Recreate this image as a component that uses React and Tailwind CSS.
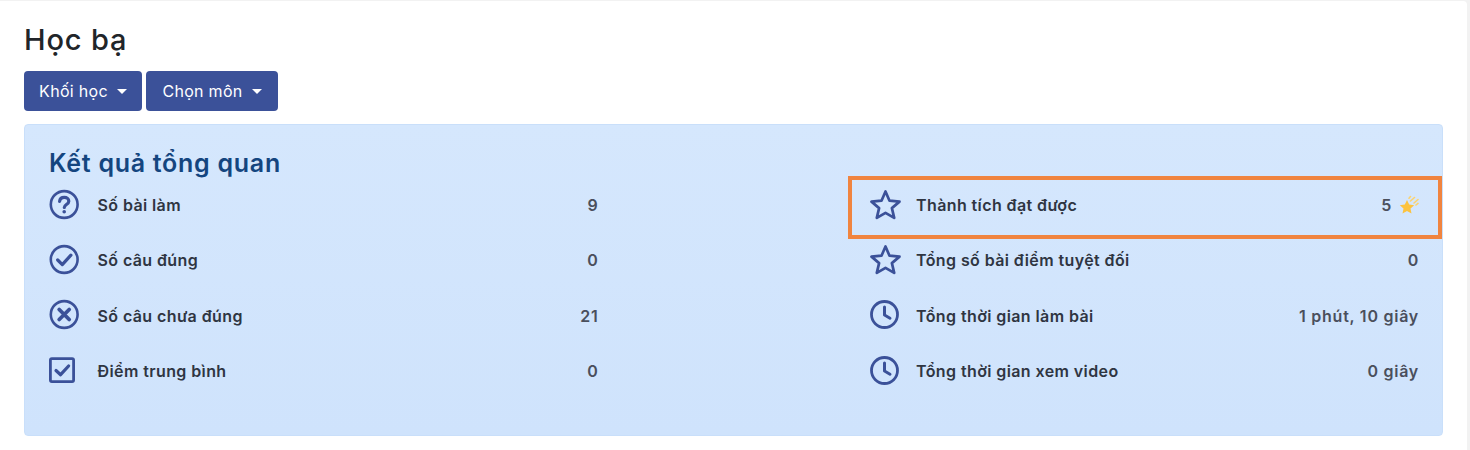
import React from "react";

const Help = () => (
  <svg width="32" height="32" viewBox="0 0 32 32" fill="none" stroke="#3b5199" strokeWidth="2.6" strokeLinecap="round" strokeLinejoin="round">
    <circle cx="16.2" cy="15.5" r="13.4" />
    <path d="M11.6 12.4c.3-2.6 2.2-4 4.7-4 2.6 0 4.5 1.6 4.5 3.8 0 3.2-4.5 3.4-4.5 6.2" strokeWidth="3.2" />
    <circle cx="16.2" cy="22.8" r="1.8" fill="#3b5199" stroke="none" />
  </svg>
);
const Check = () => (
  <svg width="32" height="32" viewBox="0 0 32 32" fill="none" stroke="#3b5199" strokeWidth="2.6" strokeLinecap="round" strokeLinejoin="round">
    <circle cx="16.2" cy="15.5" r="13.4" />
    <path d="M9.7 16l4.6 4.6 8.6-9.4" strokeWidth="3.2" />
  </svg>
);
const Cross = () => (
  <svg width="32" height="32" viewBox="0 0 32 32" fill="none" stroke="#3b5199" strokeWidth="2.6" strokeLinecap="round">
    <circle cx="16.2" cy="15.5" r="13.4" />
    <path d="M11.2 10.5l10 10M21.2 10.5l-10 10" strokeWidth="3.8" />
  </svg>
);
const SquareTick = () => (
  <svg width="32" height="32" viewBox="0 0 32 32" fill="none" stroke="#3b5199" strokeWidth="2.8" strokeLinecap="round" strokeLinejoin="round">
    <rect x="2.4" y="3.6" width="23.2" height="23" rx="1.5" />
    <path d="M8 15.5l4.6 4.2 8-8.7" strokeWidth="3.2" />
  </svg>
);
const Star = () => (
  <svg width="32" height="32" viewBox="0 0 32 32" fill="none" stroke="#3b5199" strokeWidth="2.7" strokeLinejoin="round">
    <path d="M15.5 2.5l4 9.2 10 .9-7.6 6.5 2.3 9.8-8.7-5.1-8.7 5.1 2.3-9.8-7.6-6.5 10-.9z" />
  </svg>
);
const Clock = () => (
  <svg width="32" height="32" viewBox="0 0 32 32" fill="none" stroke="#3b5199" strokeWidth="2.8" strokeLinecap="round" strokeLinejoin="round">
    <circle cx="14.5" cy="15.5" r="13" />
    <path d="M14.5 8V16l5.5 3.2" strokeWidth="3" />
  </svg>
);
const Shooting = () => (
  <svg width="20" height="20" viewBox="0 0 20 20" className="ml-[7px]">
    <path d="M8 5l2.2 4.6 5 .6-3.7 3.3 1 5-4.5-2.6-4.5 2.6 1-5L.8 10.2l5-.6z" fill="#fcc33f" />
    <path d="M11.5 6L15.5 2.5M15 8L19 4.5M17 10l2-1.6M10 3.2L11.5 1.5" stroke="#fcd36e" strokeWidth="1.6" strokeLinecap="round" fill="none" />
  </svg>
);

const Row = ({ icon, label, value, extra, right }) => (
  <div className="flex h-[55.3px] items-center justify-between">
    <div className="flex items-center">
      <div className={right ? "w-[46.5px] shrink-0" : "ml-[-1px] w-[49.5px] shrink-0"}>{icon}</div>
      <span className="pt-px text-[16px] font-semibold tracking-[0.4px] text-[#2f3542]">{label}</span>
    </div>
    <div className="mr-[-1px] flex items-center pt-px text-[16px] font-semibold tracking-[0.75px] text-[#4a4f5c]">
      {value}
      {extra}
    </div>
  </div>
);

const Dropdown = ({ label, width }) => (
  <button className={`flex h-10 ${width} items-center justify-center rounded-[4px] bg-[#3b5199] text-[16px] tracking-[0.3px] text-white`}>
    {label}
    <span className="ml-[9px] h-0 w-0 border-x-[5px] border-t-[5px] border-x-transparent border-t-white" />
  </button>
);

export default function App() {
  return (
    <div className="h-[450px] w-[1470px] bg-[#f2f2f2] pt-px pr-[3px] font-['Inter',sans-serif]">
      <div className="h-[449px] rounded-tr-[4px] bg-white px-6 pt-[20px]">
        <h1 className="text-[29px] leading-[38px] font-medium tracking-[0.85px] text-[#212529]">Học bạ</h1>
        <div className="mt-3 flex gap-1">
          <Dropdown label="Khối học" width="w-[118px]" />
          <Dropdown label="Chọn môn" width="w-[132px]" />
        </div>
        <div className="relative mt-[13px] h-[312px] w-[1419px] rounded-[4px] border border-[#c9dffa] bg-gradient-to-b from-[#d5e7fd] to-[#cfe3fc] px-6 pt-[20px]">
          <h2 className="text-[25px] leading-[36px] font-semibold tracking-[0.72px] text-[#14457f]">Kết quả tổng quan</h2>
          <div className="mt-[-4px] grid grid-cols-2 gap-x-[272px]">
            <div>
              <Row icon={<Help />} label="Số bài làm" value="9" />
              <Row icon={<Check />} label="Số câu đúng" value="0" />
              <Row icon={<Cross />} label="Số câu chưa đúng" value="21" />
              <Row icon={<SquareTick />} label="Điểm trung bình" value="0" />
            </div>
            <div>
              <Row right icon={<Star />} label="Thành tích đạt được" value="5" extra={<Shooting />} />
              <Row right icon={<Star />} label="Tổng số bài điểm tuyệt đối" value="0" />
              <Row right icon={<Clock />} label="Tổng thời gian làm bài" value="1 phút, 10 giây" />
              <Row right icon={<Clock />} label="Tổng thời gian xem video" value="0 giây" />
            </div>
          </div>
          <div className="pointer-events-none absolute top-[51px] left-[823px] h-[63px] w-[594px] border-[4px] border-[#f0843f]" />
        </div>
      </div>
    </div>
  );
}
